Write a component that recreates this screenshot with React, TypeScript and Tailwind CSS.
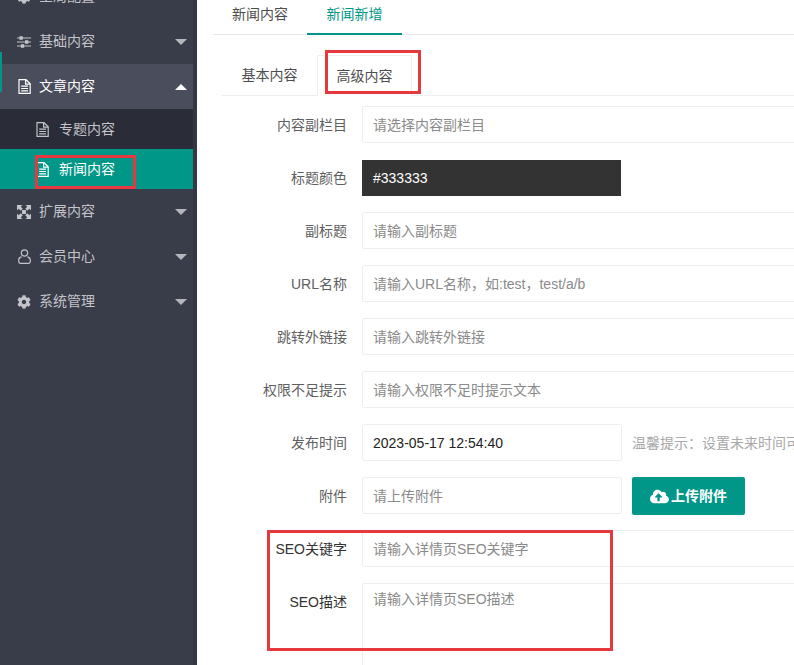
import React from "react";
import { FaCog, FaCloudUploadAlt } from "react-icons/fa";

const FONT = "font-['Liberation_Sans','Noto_Sans_CJK_SC',sans-serif]";

function Caret({ up, active }: { up?: boolean; active?: boolean }) {
  return (
    <svg width="12" height="6" viewBox="0 0 12 6" className="ml-auto mr-[6px]">
      <path d={up ? "M6 0 L12 6 L0 6 Z" : "M0 0 L12 0 L6 6 Z"} fill={active ? "#ffffff" : "#b4b6bb"} />
    </svg>
  );
}

function DocIcon({ color = "currentColor" }: { color?: string }) {
  return (
    <svg width="13" height="15" viewBox="0 0 13 15" fill="none" stroke={color} strokeWidth="1.2">
      <path d="M1 .7H8L12.2 4.8V14.3H1Z" />
      <path d="M7.6 .7V5.2H12.2" />
      <path d="M3.2 7.2H10M3.2 9.5H10M3.2 11.8H10" />
    </svg>
  );
}

function SlidersIcon() {
  return (
    <svg width="14" height="12" viewBox="0 0 14 12" fill="none" stroke="#c2c4c8" strokeWidth="1.1">
      <path d="M0 2H14M0 6H14M0 10H14" />
      <rect x="3" y=".8" width="2.2" height="2.4" fill="#c2c4c8" />
      <rect x="8.6" y="4.8" width="2.2" height="2.4" fill="#c2c4c8" />
      <rect x="4.4" y="8.8" width="2.2" height="2.4" fill="#c2c4c8" />
    </svg>
  );
}

function UserIcon() {
  return (
    <svg width="13" height="15" viewBox="0 0 13 15" fill="none" stroke="#c2c4c8" strokeWidth="1.2">
      <circle cx="6.5" cy="4" r="3.2" />
      <path d="M3.6 7.8 C1.8 8.2.7 9.3.7 11V12.6C.7 13.6 1.3 14.3 2.3 14.3H10.7C11.7 14.3 12.3 13.6 12.3 12.6V11C12.3 9.3 11.2 8.2 9.4 7.8" />
    </svg>
  );
}

function ExpandIcon() {
  return (
    <svg width="14" height="14" viewBox="0 0 14 14" fill="#c2c4c8">
      <path d="M0 0h5.5L3.8 1.7 5.8 3.7 3.7 5.8 1.7 3.8 0 5.5Z" />
      <path d="M14 0v5.5L12.3 3.8 10.3 5.8 8.2 3.7 10.2 1.7 8.5 0Z" />
      <path d="M0 14V8.5L1.7 10.2 3.7 8.2 5.8 10.3 3.8 12.3 5.5 14Z" />
      <path d="M14 14H8.5L10.2 12.3 8.2 10.3 10.3 8.2 12.3 10.2 14 8.5Z" />
      <rect x="5" y="5" width="4" height="4" />
    </svg>
  );
}

function NavRow({ icon, label, up, active }: { icon: React.ReactNode; label: string; up?: boolean; active?: boolean }) {
  return (
    <div className={`flex h-[45px] items-center pl-[17px] text-sm ${active ? "bg-[#4a4d5b] text-white" : "text-[#c2c4c8]"}`}>
      <span className="flex w-[14px] justify-center">{icon}</span>
      <span className="ml-[8px] -translate-y-[1px]">{label}</span>
      <Caret up={up} active={active} />
    </div>
  );
}

function SubRow({ label, active }: { label: string; active?: boolean }) {
  return (
    <div className={`flex h-[40px] items-center pl-[36px] text-sm ${active ? "bg-[#009688] text-white" : "bg-[#2a2c37] text-[#c2c4c8]"}`}>
      <DocIcon />
      <span className="ml-[10px]">{label}</span>
    </div>
  );
}

function Row({ label, children, dark, top = "h-[37px] mb-[16px]" }: { label: string; children: React.ReactNode; dark?: boolean; top?: string }) {
  return (
    <div className={`flex ${top}`}>
      <label className={`flex w-[125px] items-center justify-end text-sm ${dark ? "text-[#333333]" : "text-[#5f5f5f]"}`}>{label}</label>
      <div className="ml-[15px] flex min-w-0 flex-1">{children}</div>
    </div>
  );
}

function Field({ placeholder }: { placeholder: string }) {
  return (
    <div className="flex h-[37px] w-full items-center whitespace-nowrap rounded-[2px] border border-[#eeeeee] bg-white pl-[10px] text-sm text-[#8a8a8a]">
      {placeholder}
    </div>
  );
}

export default function App() {
  return (
    <div className={`relative flex h-[665px] w-[794px] overflow-hidden bg-white ${FONT}`}>
      <aside className="relative h-full w-[197px] shrink-0 overflow-hidden bg-[#393c49]">
        <div className="-mt-[26px] mr-[4px]">
          <NavRow icon={<FaCog size={14} />} label="全局配置" />
          <NavRow icon={<SlidersIcon />} label="基础内容" />
          <NavRow icon={<DocIcon color="#ffffff" />} label="文章内容" up active />
          <div className="-mt-px pt-px">
            <SubRow label="专题内容" />
            <SubRow label="新闻内容" active />
          </div>
          <NavRow icon={<ExpandIcon />} label="扩展内容" />
          <NavRow icon={<UserIcon />} label="会员中心" />
          <NavRow icon={<FaCog size={14} />} label="系统管理" />
        </div>
        <div className="absolute left-0 top-[52px] h-[40px] w-[2px] bg-[#009688]" />
        <div className="absolute right-0 top-0 h-full w-[4px] bg-[#353844]" />
      </aside>

      <main className="min-w-0 flex-1 pl-[16px]">
        <div className="flex h-[35px] w-[620px] border-b border-[#e6e6e6] text-sm">
          <div className="flex h-[34px] w-[94px] items-center justify-center pb-[6px] text-[#4d4d4d]">新闻内容</div>
          <div className="flex h-[35px] w-[95px] items-center justify-center border-b-2 border-[#009688] pb-[6px] text-[#009688]">新闻新增</div>
        </div>

        <div className="ml-[9px] w-[620px]">
          <div className="mt-[20px] flex h-[41px] border-b border-[#eeeeee] text-sm text-[#4d4d4d]">
            <div className="flex h-[40px] w-[95px] items-center justify-center">基本内容</div>
            <div className="flex h-[41px] w-[95px] items-center justify-center rounded-t-[2px] border-x border-t border-[#eeeeee] bg-white">高级内容</div>
          </div>

          <div className="mt-[10px]">
            <Row label="内容副栏目" top="h-[37px] mb-[17px]"><Field placeholder="请选择内容副栏目" /></Row>
            <Row label="标题颜色" top="h-[36px] mb-[16px]">
              <div className="flex h-[36px] w-[259px] items-center bg-[#333333] pl-[11px] text-sm text-white">#333333</div>
            </Row>
            <Row label="副标题"><Field placeholder="请输入副标题" /></Row>
            <Row label="URL名称"><Field placeholder="请输入URL名称，如:test，test/a/b" /></Row>
            <Row label="跳转外链接"><Field placeholder="请输入跳转外链接" /></Row>
            <Row label="权限不足提示"><Field placeholder="请输入权限不足时提示文本" /></Row>
            <Row label="发布时间">
              <div className="flex h-[37px] w-[260px] shrink-0 items-center rounded-[2px] border border-[#eeeeee] pl-[10px] text-sm text-[#222222]">2023-05-17 12:54:40</div>
              <span className="ml-[10px] flex items-center whitespace-nowrap text-sm text-[#a8a8a8]">温馨提示：设置未来时间可定时发布</span>
            </Row>
            <Row label="附件">
              <div className="w-[260px] shrink-0"><Field placeholder="请上传附件" /></div>
              <button className="ml-[10px] flex h-[38px] w-[113px] shrink-0 items-center justify-center rounded-[2px] bg-[#009688] text-sm font-bold text-white">
                <FaCloudUploadAlt size={19} />
                <span className="ml-[2px]">上传附件</span>
              </button>
            </Row>
            <Row label="SEO关键字" dark><Field placeholder="请输入详情页SEO关键字" /></Row>
            <div className="flex">
              <label className="flex h-[37px] w-[125px] items-center justify-end text-sm text-[#333333]">SEO描述</label>
              <div className="ml-[15px] h-[110px] flex-1 rounded-[2px] border border-[#eeeeee] pl-[10px] pt-[5px] text-sm text-[#8a8a8a]">请输入详情页SEO描述</div>
            </div>
          </div>
        </div>
      </main>

      <div className="absolute left-[35px] top-[155px] h-[34px] w-[101px] border-[3px] border-[#e8383f]" />
      <div className="absolute left-[325px] top-[50px] h-[44px] w-[96px] border-[3px] border-[#e8383f]" />
      <div className="absolute left-[267px] top-[530px] h-[121px] w-[346px] border-[3px] border-[#e8383f]" />
    </div>
  );
}
